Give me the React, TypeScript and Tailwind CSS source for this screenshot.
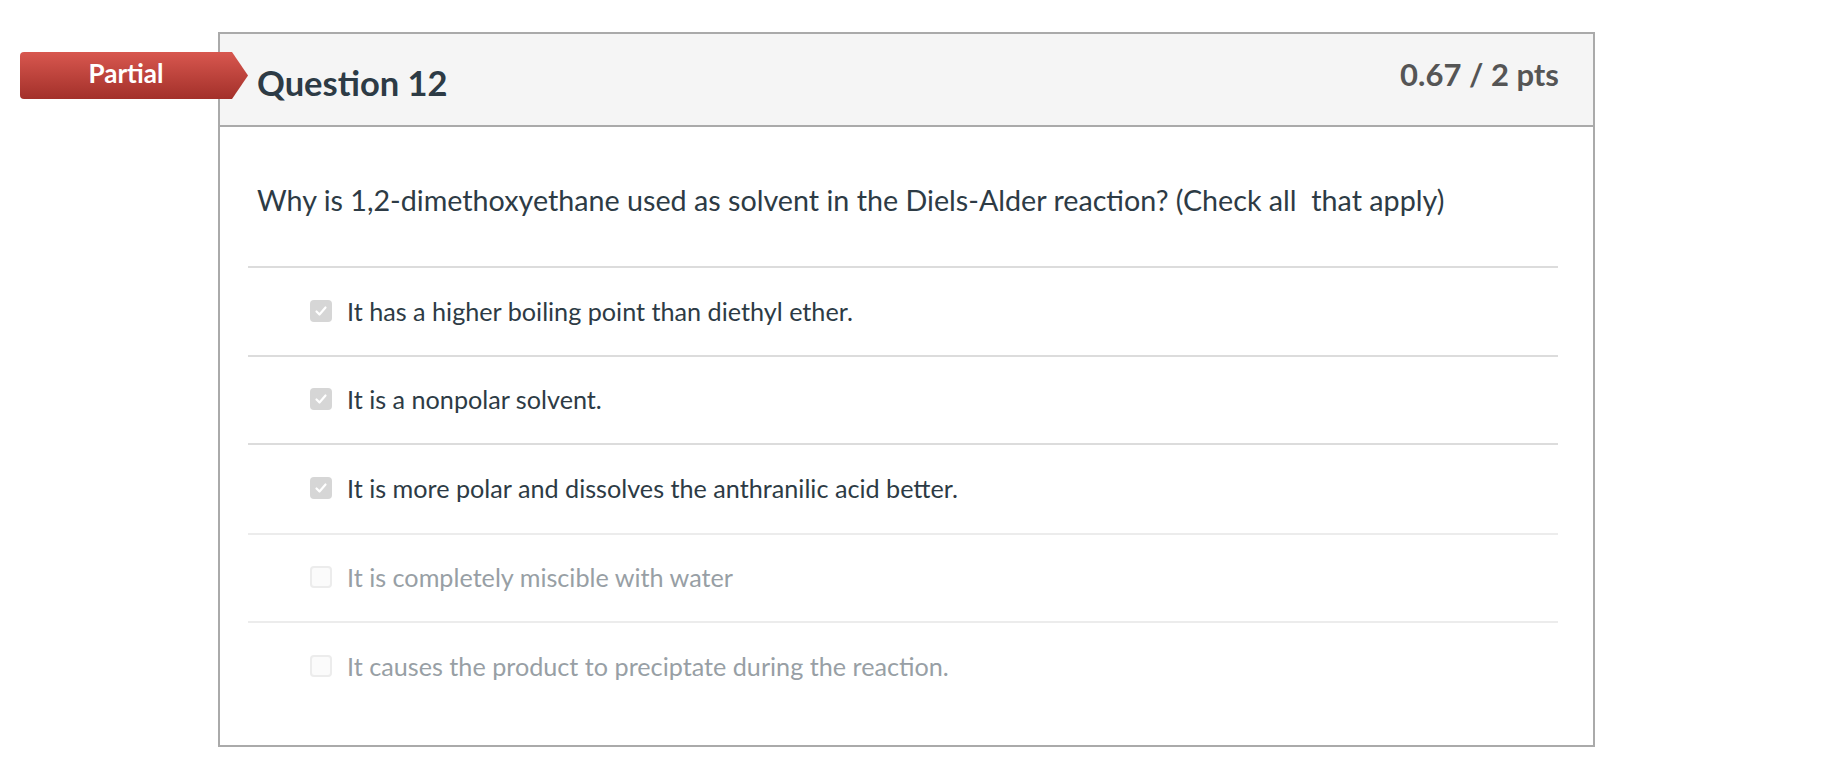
import React from "react";

const font = { fontFamily: "Lato, 'Noto Sans', sans-serif" };

function Check({ checked }: { checked: boolean }) {
  if (checked) {
    return (
      <div className="w-[22px] h-[22px] rounded-[4px] bg-[#d6d6d6] flex items-center justify-center shrink-0">
        <svg width="14" height="14" viewBox="0 0 14 14">
          <path d="M2.5 7.5 L5.5 10.5 L11.5 3.5" fill="none" stroke="#ffffff" strokeWidth="2.2" strokeLinecap="round" strokeLinejoin="round" />
        </svg>
      </div>
    );
  }
  return <div className="w-[22px] h-[22px] rounded-[4px] bg-[#fbfbfb] border-2 border-[#ececec] shrink-0" />;
}

const answers = [
  { text: "It has a higher boiling point than diethyl ether.", checked: true, h: "h-[89px]", b: "border-[#dcdcdc]" },
  { text: "It is a nonpolar solvent.", checked: true, h: "h-[88px]", b: "border-[#dcdcdc]" },
  { text: "It is more polar and dissolves the anthranilic acid better.", checked: true, h: "h-[90px]", b: "border-[#dcdcdc]" },
  { text: "It is completely miscible with water", checked: false, h: "h-[88px]", b: "border-[#ececec]" },
  { text: "It causes the product to preciptate during the reaction.", checked: false, h: "h-[90px]", b: "border-[#ececec]" },
];

export default function App() {
  return (
    <div className="relative w-[1830px] h-[780px] bg-white pt-[32px] pl-[218px]" style={font}>
      <div className="absolute left-[20px] top-[52px] w-[228px] h-[47px] rounded-l-[4px] bg-gradient-to-b from-[#d8574f] to-[#a3302a] flex items-center [clip-path:polygon(0_0,212px_0,228px_50%,212px_100%,0_100%)]">
        <div className="w-[212px] text-center text-white font-bold text-[26px] leading-none pb-[5px]">Partial</div>
      </div>
      <div className="w-[1377px] h-[715px] border-2 border-[#aaaaaa] flex flex-col">
        <div className="h-[93px] bg-[#f5f5f5] border-b-2 border-[#aaaaaa] flex justify-between pl-[37px] pr-[34px] shrink-0">
          <div className="pt-[29px] text-[34.5px] font-bold text-[#2d3b45] leading-[40px]">Question 12</div>
          <div className="pt-[20px] text-[31px] font-bold text-[#555555] leading-[40px]">0.67 / 2 pts</div>
        </div>
        <div className="pl-[28px] pr-[35px]">
          <div className="pl-[9px] pt-[55px] pb-[48px] text-[28.7px] text-[#2d3b45] leading-[36px] whitespace-pre">
            {"Why is 1,2-dimethoxyethane used as solvent in the Diels-Alder reaction? (Check all  that apply)"}
          </div>
          {answers.map((a, i) => (
            <div key={i} className={a.h + " pb-[2px] flex items-center gap-[15px] pl-[62px] border-t-2 " + a.b}>
              <Check checked={a.checked} />
              <div className={"text-[25.2px] leading-[30px] " + (a.checked ? "text-[#2d3b45]" : "text-[#989fa5]")}>{a.text}</div>
            </div>
          ))}
        </div>
      </div>
    </div>
  );
}
